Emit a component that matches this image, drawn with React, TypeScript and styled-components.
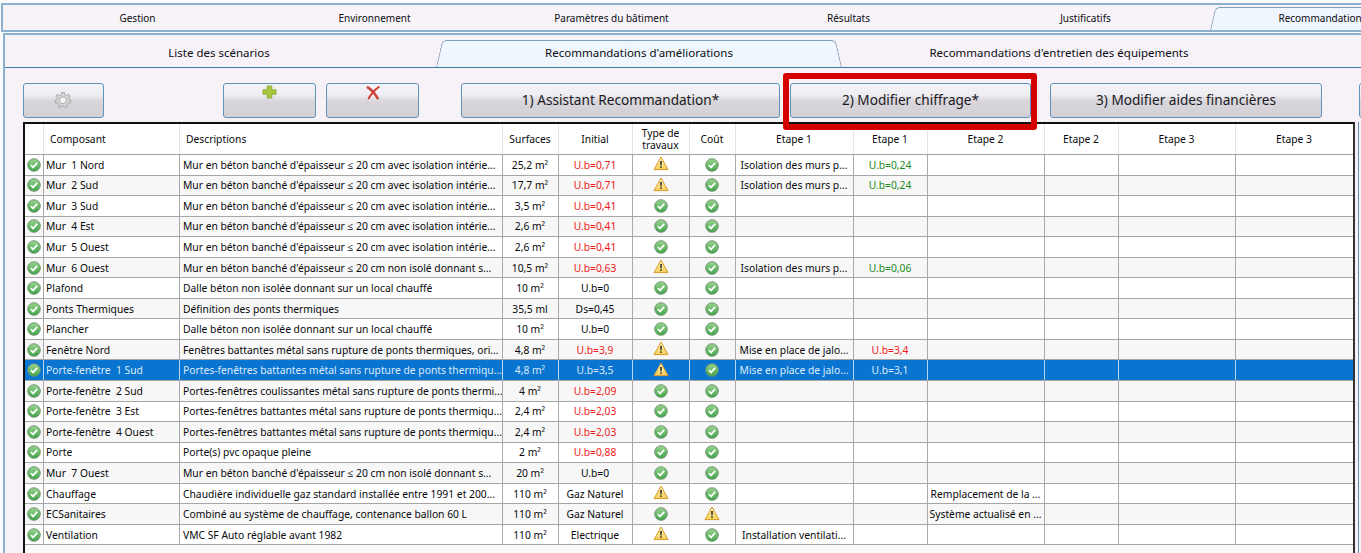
import styled, { createGlobalStyle } from 'styled-components';

const GlobalStyle = createGlobalStyle`
  html, body {
    margin: 0;
    padding: 0;
    height: 553px;
    overflow: hidden;
    background: #fbfafc;
    font-family: 'Noto Sans', 'Open Sans', sans-serif;
  }
`;

const COLUMNS = '19px 136px 323px 56px 74px 57px 46px 118px 74px 117px 74px 117px 117px';

const Shell = styled.div`
  width: 1361px;
  height: 553px;
  padding: 3px 0 0 1px;
  box-sizing: border-box;
  overflow: hidden;
`;

const OuterTabs = styled.div`
  display: grid;
  grid-template-columns: repeat(6, 237px);
  height: 29px;
  padding: 2px 0 0 16px;
  box-sizing: border-box;
  border-top: 2px solid #8eb0cf;
  border-bottom: 2px solid #8eb0cf;
  border-left: 2px solid #8eb0cf;
  background: #f7f3f8;
`;

const Tab = styled.div<{ $active?: boolean; $size: number; $inset: number }>`
  position: relative;
  z-index: 0;
  display: flex;
  align-items: center;
  justify-content: center;
  padding-bottom: 2px;
  font-size: ${({ $size }) => $size}px;
  color: #0c0c12;
  white-space: nowrap;

  ${({ $active, $inset }) =>
    $active &&
    `
    &::before, &::after {
      content: '';
      position: absolute;
      z-index: -1;
      top: 0;
      bottom: 0;
      width: 50%;
      box-sizing: border-box;
      background: #eff6fd;
      border-top: 1px solid #7d9db8;
    }
    &::before {
      left: ${$inset}px;
      border-left: 1px solid #7d9db8;
      border-top-left-radius: 5px;
      transform-origin: bottom left;
      transform: skewX(-13deg);
    }
    &::after {
      right: ${$inset}px;
      border-right: 1px solid #7d9db8;
      border-top-right-radius: 5px;
      transform-origin: bottom right;
      transform: skewX(13deg);
    }
  `}
`;

const Panel = styled.div`
  margin: 1px 0 0 2px;
  height: 520px;
  border-top: 2px solid #8eb0cf;
  border-left: 2px solid #8eb0cf;
  background: #f6f2f7;
`;

const InnerTabs = styled.div`
  display: grid;
  grid-template-columns: repeat(3, 420px);
  height: 27px;
  padding: 5px 0 0 4px;
  border-bottom: 1px solid #3f7aa6;
`;

const Toolbar = styled.div`
  display: flex;
  height: 35px;
  padding: 15px 0 0 18px;
`;

const ToolButton = styled.div<{ $width: number; $gap?: number }>`
  position: relative;
  flex: none;
  display: flex;
  align-items: center;
  justify-content: center;
  width: ${({ $width }) => $width}px;
  margin-left: ${({ $gap }) => $gap ?? 0}px;
  padding-bottom: 2px;
  box-sizing: border-box;
  border: 1px solid #5f93bb;
  border-radius: 3px;
  background: linear-gradient(#f3f2f7 0%, #efeef3 32%, #d8d6da 52%, #d3d1d5 100%);
  font-size: 13.6px;
  color: #1a1a1e;
  white-space: nowrap;
`;

const IconSlot = styled.span<{ $up: number }>`
  display: flex;
  margin-top: ${({ $up }) => -$up}px;
`;

const Highlight = styled.div`
  position: absolute;
  top: -11px;
  right: -7px;
  bottom: -13px;
  left: -8px;
  border: 6px solid #d40000;
  border-radius: 3px;
  z-index: 2;
`;

const TableRow = styled.div`
  display: flex;
  margin-top: 4px;
  padding-left: 18px;
`;

const SidePanel = styled.div`
  flex: none;
  width: 10px;
  height: 440px;
  margin-left: 3px;
  border-left: 1px solid #5f93bb;
`;

const Table = styled.div`
  flex: none;
  width: 1332px;
  height: 440px;
  box-sizing: border-box;
  border-top: 2px solid #111;
  border-left: 2px solid #111;
  border-right: 2px solid #333;
  background: #f9f9f9;
`;

const HeaderRow = styled.div`
  display: grid;
  grid-template-columns: ${COLUMNS};
  height: 31px;
  box-sizing: border-box;
  background: #fff;
  border-bottom: 1px solid #a2a2a2;
`;

const HeaderCell = styled.div<{ $pad?: number }>`
  display: flex;
  align-items: center;
  justify-content: ${({ $pad }) => ($pad ? 'flex-start' : 'center')};
  padding: 0 ${({ $pad }) => ($pad ? 0 : 1)}px 0 ${({ $pad }) => $pad ?? 0}px;
  border-right: 1px solid #e4e4e4;
  font-size: 10.3px;
  line-height: 12px;
  text-align: center;
  color: #08080c;
  &:last-child {
    border-right: none;
  }
`;

const Row = styled.div<{ $selected?: boolean; $stripe?: boolean }>`
  display: grid;
  grid-template-columns: ${COLUMNS};
  height: 20.56px;
  box-sizing: border-box;
  border-bottom: 1.5px solid #a6a6a6;
  background: ${({ $selected, $stripe }) => ($selected ? '#0a74d1' : $stripe ? '#f7f7f7' : '#fff')};
  color: ${({ $selected }) => ($selected ? '#dcecfb' : '#08080c')};
`;

const Cell = styled.div<{ $pad?: number; $tone?: Tone; $selected?: boolean }>`
  display: flex;
  align-items: center;
  justify-content: ${({ $pad }) => ($pad ? 'flex-start' : 'center')};
  padding: 0 ${({ $pad }) => ($pad ? 0 : 1)}px 0 ${({ $pad }) => $pad ?? 0}px;
  border-right: 1.5px solid ${({ $selected }) => ($selected ? '#b7d6f3' : '#a9a9a9')};
  font-size: 10.3px;
  white-space: pre;
  overflow: hidden;
  color: ${({ $tone }) => ($tone === 'red' ? '#f01818' : $tone === 'green' ? '#1a8a1a' : 'inherit')};
  &:last-child {
    border-right: none;
  }
`;

const CheckIcon = () => (
  <svg width="14" height="14" viewBox="0 0 14 14">
    <defs>
      <linearGradient id="okFill" x1="0" y1="0" x2="0" y2="1">
        <stop offset="0" stopColor="#9ad48f" />
        <stop offset="1" stopColor="#3fa548" />
      </linearGradient>
    </defs>
    <circle cx="7" cy="7" r="6.3" fill="url(#okFill)" stroke="#6f8f72" strokeWidth="0.9" />
    <path d="M3.9 7.2 L6.1 9.4 L10.2 4.9" fill="none" stroke="#fff" strokeWidth="1.7" />
  </svg>
);

const WarnIcon = () => (
  <svg width="16" height="15" viewBox="0 0 16 15" style={{ marginTop: -2 }}>
    <defs>
      <linearGradient id="warnFill" x1="0" y1="0" x2="0" y2="1">
        <stop offset="0" stopColor="#fff6c4" />
        <stop offset="1" stopColor="#f8cf58" />
      </linearGradient>
    </defs>
    <path
      d="M8 1 L15 13.6 L1 13.6 Z"
      fill="url(#warnFill)"
      stroke="#d99a2b"
      strokeWidth="1"
      strokeLinejoin="round"
    />
    <path d="M7.2 5 H8.8 L8.5 9.6 H7.5 Z" fill="#1a1a1a" />
    <rect x="7.3" y="10.4" width="1.4" height="1.5" fill="#1a1a1a" />
  </svg>
);

const GearIcon = () => (
  <svg width="18" height="18" viewBox="0 0 18 18" style={{ marginRight: 2 }}>
    <g fill="#d6d6d6" stroke="#979797" strokeWidth="0.7">
      <path d="M7.6 1.5 H10.4 L10.8 3.6 L12.6 4.4 L14.4 3.2 L16 5.2 L14.6 6.9 L15.1 8.8 L17 9.6 L16.4 12 L14.3 12 L13.1 13.6 L13.8 15.6 L11.5 16.6 L10.2 14.9 H7.8 L6.5 16.6 L4.2 15.6 L4.9 13.6 L3.7 12 L1.6 12 L1 9.6 L2.9 8.8 L3.4 6.9 L2 5.2 L3.6 3.2 L5.4 4.4 L7.2 3.6 Z" />
      <circle cx="9" cy="9.2" r="3.4" fill="#f4f4f4" />
    </g>
  </svg>
);

const PlusIcon = () => (
  <svg width="15" height="14" viewBox="0 0 16 15">
    <path
      d="M5.5 1 H10.5 V5 H15 V10 H10.5 V14 H5.5 V10 H1 V5 H5.5 Z"
      fill="#a5c63b"
      stroke="#86a52c"
      strokeWidth="0.8"
    />
  </svg>
);

const CrossIcon = () => (
  <svg width="16" height="15" viewBox="0 0 16 16">
    <path d="M1.5 2 C6 4.5 10 9 13.5 15" fill="none" stroke="#c8433a" strokeWidth="2.6" />
    <path d="M14.8 1.5 C10 5 5.5 10 3 15" fill="none" stroke="#d8372c" strokeWidth="2" />
  </svg>
);

type Tone = 'red' | 'green';
type Mark = 'ok' | 'warn';

interface RowData {
  name: string;
  description: string;
  surface: string;
  initial: string;
  initialTone?: Tone;
  work: Mark;
  cost: Mark;
  step1?: string;
  step1Value?: string;
  step1Tone?: Tone;
  step2?: string;
}

const WALL_INSULATED = "Mur en béton banché d'épaisseur ≤ 20 cm avec isolation intérie...";
const WALL_BARE = "Mur en béton banché d'épaisseur ≤ 20 cm non isolé donnant s...";
const SLAB = 'Dalle béton non isolée donnant sur un local chauffé';
const DOOR_SWING = 'Portes-fenêtres battantes métal sans rupture de ponts thermiqu...';
const WALL_WORK = 'Isolation des murs p...';
const BLIND_WORK = 'Mise en place de jalo...';

const rows: RowData[] = [
  { name: 'Mur  1 Nord', description: WALL_INSULATED, surface: '25,2 m²', initial: 'U.b=0,71', initialTone: 'red', work: 'warn', cost: 'ok', step1: WALL_WORK, step1Value: 'U.b=0,24', step1Tone: 'green' },
  { name: 'Mur  2 Sud', description: WALL_INSULATED, surface: '17,7 m²', initial: 'U.b=0,71', initialTone: 'red', work: 'warn', cost: 'ok', step1: WALL_WORK, step1Value: 'U.b=0,24', step1Tone: 'green' },
  { name: 'Mur  3 Sud', description: WALL_INSULATED, surface: '3,5 m²', initial: 'U.b=0,41', initialTone: 'red', work: 'ok', cost: 'ok' },
  { name: 'Mur  4 Est', description: WALL_INSULATED, surface: '2,6 m²', initial: 'U.b=0,41', initialTone: 'red', work: 'ok', cost: 'ok' },
  { name: 'Mur  5 Ouest', description: WALL_INSULATED, surface: '2,6 m²', initial: 'U.b=0,41', initialTone: 'red', work: 'ok', cost: 'ok' },
  { name: 'Mur  6 Ouest', description: WALL_BARE, surface: '10,5 m²', initial: 'U.b=0,63', initialTone: 'red', work: 'warn', cost: 'ok', step1: WALL_WORK, step1Value: 'U.b=0,06', step1Tone: 'green' },
  { name: 'Plafond', description: SLAB, surface: '10 m²', initial: 'U.b=0', work: 'ok', cost: 'ok' },
  { name: 'Ponts Thermiques', description: 'Définition des ponts thermiques', surface: '35,5 ml', initial: 'Ds=0,45', work: 'ok', cost: 'ok' },
  { name: 'Plancher', description: SLAB, surface: '10 m²', initial: 'U.b=0', work: 'ok', cost: 'ok' },
  { name: 'Fenêtre Nord', description: 'Fenêtres battantes métal sans rupture de ponts thermiques, ori...', surface: '4,8 m²', initial: 'U.b=3,9', initialTone: 'red', work: 'warn', cost: 'ok', step1: BLIND_WORK, step1Value: 'U.b=3,4', step1Tone: 'red' },
  { name: 'Porte-fenêtre  1 Sud', description: DOOR_SWING, surface: '4,8 m²', initial: 'U.b=3,5', work: 'warn', cost: 'ok', step1: BLIND_WORK, step1Value: 'U.b=3,1' },
  { name: 'Porte-fenêtre  2 Sud', description: 'Portes-fenêtres coulissantes métal sans rupture de ponts thermi...', surface: '4 m²', initial: 'U.b=2,09', initialTone: 'red', work: 'ok', cost: 'ok' },
  { name: 'Porte-fenêtre  3 Est', description: DOOR_SWING, surface: '2,4 m²', initial: 'U.b=2,03', initialTone: 'red', work: 'ok', cost: 'ok' },
  { name: 'Porte-fenêtre  4 Ouest', description: DOOR_SWING, surface: '2,4 m²', initial: 'U.b=2,03', initialTone: 'red', work: 'ok', cost: 'ok' },
  { name: 'Porte', description: 'Porte(s) pvc opaque pleine', surface: '2 m²', initial: 'U.b=0,88', initialTone: 'red', work: 'ok', cost: 'ok' },
  { name: 'Mur  7 Ouest', description: WALL_BARE, surface: '20 m²', initial: 'U.b=0', work: 'ok', cost: 'ok' },
  { name: 'Chauffage', description: 'Chaudière individuelle gaz standard installée entre 1991 et 200...', surface: '110 m²', initial: 'Gaz Naturel', work: 'warn', cost: 'ok', step2: 'Remplacement de la ...' },
  { name: 'ECSanitaires', description: 'Combiné au système de chauffage, contenance ballon 60 L', surface: '110 m²', initial: 'Gaz Naturel', work: 'ok', cost: 'warn', step2: 'Système actualisé en ...' },
  { name: 'Ventilation', description: 'VMC SF Auto réglable avant 1982', surface: '110 m²', initial: 'Electrique', work: 'warn', cost: 'ok', step1: 'Installation ventilati...' },
];

const SELECTED = 10;

const outerTabs = ['Gestion', 'Environnement', 'Paramètres du bâtiment', 'Résultats', 'Justificatifs', 'Recommandations'];
const innerTabs = ['Liste des scénarios', "Recommandations d'améliorations", "Recommandations d'entretien des équipements"];
const headers = ['Surfaces', 'Initial', 'Type de travaux', 'Coût', 'Etape 1', 'Etape 1', 'Etape 2', 'Etape 2', 'Etape 3', 'Etape 3'];

const MarkIcon = ({ mark }: { mark: Mark }) => (mark === 'ok' ? <CheckIcon /> : <WarnIcon />);

const App = () => (
  <Shell>
    <GlobalStyle />
    <OuterTabs>
      {outerTabs.map((label) => (
        <Tab key={label} $size={10} $inset={6} $active={label === 'Recommandations'}>
          {label}
        </Tab>
      ))}
    </OuterTabs>
    <Panel>
      <InnerTabs>
        {innerTabs.map((label, i) => (
          <Tab key={label} $size={11.5} $inset={7} $active={i === 1}>
            {label}
          </Tab>
        ))}
      </InnerTabs>
      <Toolbar>
        <ToolButton $width={81}>
          <GearIcon />
        </ToolButton>
        <ToolButton $width={93} $gap={119}>
          <IconSlot $up={15}>
            <PlusIcon />
          </IconSlot>
        </ToolButton>
        <ToolButton $width={93} $gap={10}>
          <IconSlot $up={14}>
            <CrossIcon />
          </IconSlot>
        </ToolButton>
        <ToolButton $width={319} $gap={42}>
          1) Assistant Recommandation*
        </ToolButton>
        <ToolButton $width={241} $gap={10}>
          2) Modifier chiffrage*
          <Highlight />
        </ToolButton>
        <ToolButton $width={272} $gap={19}>
          3) Modifier aides financières
        </ToolButton>
        <ToolButton $width={40} $gap={37} />
      </Toolbar>
      <TableRow>
        <Table>
          <HeaderRow>
            <HeaderCell />
            <HeaderCell $pad={6}>Composant</HeaderCell>
            <HeaderCell $pad={6}>Descriptions</HeaderCell>
            {headers.map((label, i) => (
              <HeaderCell key={i}>{label}</HeaderCell>
            ))}
          </HeaderRow>
          {rows.map((row, i) => {
            const selected = i === SELECTED;
            return (
              <Row key={row.name} $selected={selected} $stripe={i % 2 === 1}>
                <Cell $selected={selected}>
                  <CheckIcon />
                </Cell>
                <Cell $pad={2} $selected={selected}>{row.name}</Cell>
                <Cell $pad={3} $selected={selected}>{row.description}</Cell>
                <Cell $selected={selected}>{row.surface}</Cell>
                <Cell $tone={row.initialTone} $selected={selected}>{row.initial}</Cell>
                <Cell $selected={selected}>
                  <MarkIcon mark={row.work} />
                </Cell>
                <Cell $selected={selected}>
                  <MarkIcon mark={row.cost} />
                </Cell>
                <Cell $selected={selected}>{row.step1}</Cell>
                <Cell $tone={row.step1Tone} $selected={selected}>{row.step1Value}</Cell>
                <Cell $selected={selected}>{row.step2}</Cell>
                <Cell $selected={selected} />
                <Cell $selected={selected} />
                <Cell $selected={selected} />
              </Row>
            );
          })}
        </Table>
        <SidePanel />
      </TableRow>
    </Panel>
  </Shell>
);

export default App;
